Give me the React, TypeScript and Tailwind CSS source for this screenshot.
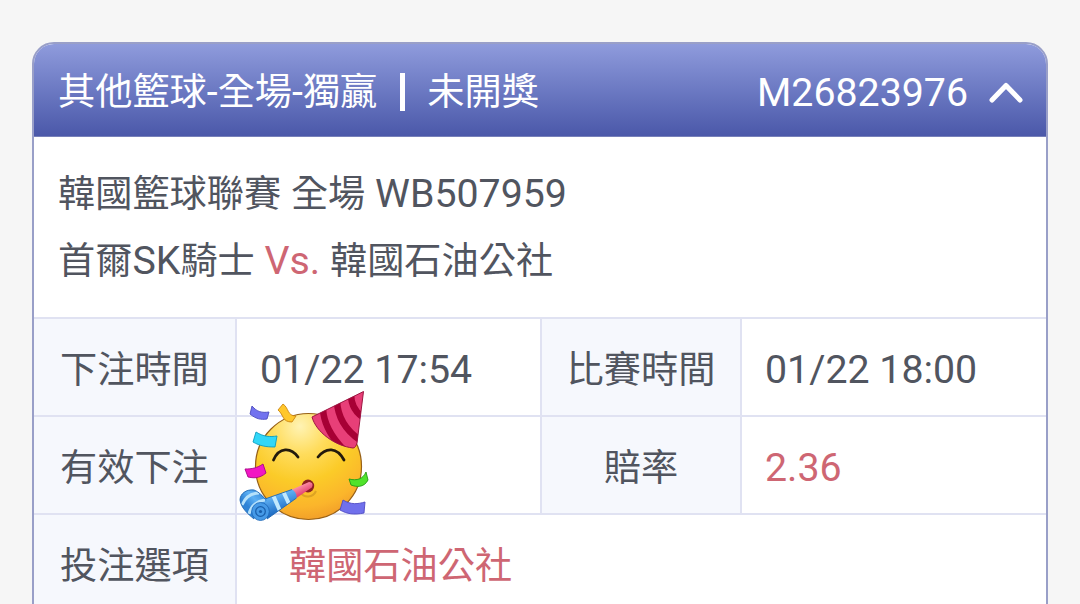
import React from 'react';
import clsx from 'clsx';

const Latin = ({ children, className }: { children: React.ReactNode; className?: string }) => (
  <span className={clsx('whitespace-pre text-[39.3px]', className)}>{children}</span>
);

const PartyFace = () => (
  <svg className="absolute left-[2px] top-[-26px] z-10 h-[134px] w-[132px]" viewBox="0 0 132 134" fill="none">
    <defs>
      <radialGradient id="face" cx="0.42" cy="0.12" r="0.95">
        <stop offset="0" stopColor="#fff3b4" />
        <stop offset="0.28" stopColor="#ffdc5c" />
        <stop offset="0.55" stopColor="#fbcb28" />
        <stop offset="0.8" stopColor="#fbb52b" />
        <stop offset="1" stopColor="#ee9528" />
      </radialGradient>
      <linearGradient id="horn" x1="36" y1="103" x2="42" y2="121" gradientUnits="userSpaceOnUse">
        <stop stopColor="#66b8f8" />
        <stop offset="1" stopColor="#1f6dc4" />
      </linearGradient>
      <linearGradient id="roll" x1="8" y1="114" x2="22" y2="101" gradientUnits="userSpaceOnUse">
        <stop stopColor="#2f83d6" />
        <stop offset="0.5" stopColor="#5cb0f4" />
        <stop offset="1" stopColor="#3b8edd" />
      </linearGradient>
      <linearGradient id="tip" x1="60" y1="94" x2="65" y2="104" gradientUnits="userSpaceOnUse">
        <stop stopColor="#ff99ac" />
        <stop offset="1" stopColor="#df366a" />
      </linearGradient>
      <clipPath id="hat">
        <path d="M124.500 0.500L73 26C77 41 96 55 114 57C116 57 117 55 118 52Z" />
      </clipPath>
      <clipPath id="tube">
        <path d="M22 109.500L53 98.500C56 100 58 103 57.500 107L28 128Z" />
      </clipPath>
      <clipPath id="coil">
        <path d="M1 109C1 103 7 98 15 99C18 100 24 105 28 109L15 128C9 123 2 117 1 109Z" />
      </clipPath>
    </defs>

    <circle cx="69.500" cy="75.500" r="53" fill="url(#face)" stroke="#976016" strokeWidth="1.200" />

    {/* eyes */}
    <path d="M34.500 69C40 56 52 56 59 66M79 66C87 56 98 56 105 69" stroke="#231a0c" strokeWidth="2.800" strokeLinecap="round" />

    {/* mouth */}
    <path d="M62 102C65 107 74 107 77 100" stroke="#dda323" strokeWidth="2" />
    <ellipse cx="69" cy="95" rx="6.200" ry="6.500" fill="#8d2022" />

    {/* hat */}
    <g clipPath="url(#hat)">
      <path d="M65 0H130V64H65Z" fill="#e83f78" />
      <path d="M84 18Q85 39 106 60M98 10Q99 34 121 49M112 3Q112 20 127 28" stroke="#a70035" strokeWidth="6.500" />
    </g>
    <path d="M124.500 0.500L73 26C77 41 96 55 114 57C116 57 117 55 118 52Z" stroke="#9c1742" strokeWidth="1" />

    {/* blower */}
    <path d="M53 98.500L70 91C74 91 74.500 95 72 97L57.500 107Z" fill="url(#tip)" />
    <g clipPath="url(#tube)">
      <path d="M20 95H60V130H20Z" fill="url(#horn)" />
      <path d="M34 104L41 120M44 100L51 115" stroke="#c2e9fd" strokeWidth="4" />
    </g>
    <g clipPath="url(#coil)">
      <path d="M0 96H30V130H0Z" fill="url(#roll)" />
      <path d="M3 114Q8 102 20 102M10 123Q13 111 26 109" stroke="#b5e1fb" strokeWidth="3" />
    </g>
    <path d="M15 128C9 123 2 117 1 109C1 103 7 98 15 99C18 100 22 103 26 108L53 98.500M28 128L57.500 107" stroke="#1f66b0" strokeWidth="0.900" />
    <ellipse cx="21.500" cy="120.500" rx="8.800" ry="9" fill="#469ae7" stroke="#1b64b5" strokeWidth="0.800" />
    <ellipse cx="21.500" cy="120.500" rx="4.800" ry="4.800" stroke="#185eaa" strokeWidth="1.200" />
    <circle cx="21.500" cy="120.500" r="1.600" fill="#185eaa" />

    {/* confetti */}
    <g strokeWidth="0.900" strokeLinejoin="round">
      <path d="M13 15C18 21 23 22 30 21L28 28C22 29 17 28 11 23Z" fill="#7272ef" stroke="#4c4bbe" />
      <path d="M39 19L44 13C50 17 48 25 57 25L53 31C43 31 45 24 39 19Z" fill="#ffc72b" stroke="#cc8611" />
      <path d="M17 41C25 46 31 46 38 45L36 56C27 56 21 55 14 51Z" fill="#31d7f8" stroke="#0b9cbf" />
      <path d="M6 78C13 78 18 77 24 73L27 82C20 88 14 87 9 86Z" fill="#f216c3" stroke="#a60586" />
      <path d="M110 88C118 90 124 88 127 81L129 89C125 97 117 96 112 94Z" fill="#50e32b" stroke="#239b13" />
      <path d="M104 109C112 114 119 113 126 111L125 122C115 124 108 123 101 119Z" fill="#7070ec" stroke="#4e4ac4" />
    </g>
  </svg>
);

const Label = ({ children, center }: { children: React.ReactNode; center?: boolean }) => (
  <div
    className={clsx(
      'flex items-center border-r-2 border-t-2 border-[#e0e2f2] bg-[#f6f8fd] pt-[7px]',
      center ? 'justify-center' : 'pl-[26px]'
    )}
  >
    {children}
  </div>
);

const Value = ({ children, className }: { children?: React.ReactNode; className?: string }) => (
  <div className={clsx('relative flex items-center border-t-2 border-[#e0e2f2]', className)}>{children}</div>
);

const App = () => {
  return (
    <div className="h-[604px] overflow-hidden bg-[#f6f6f6] px-8 pt-[42px] font-[Roboto,'Noto_Sans_CJK_TC',sans-serif] text-[37.2px] leading-[67px] text-[#51555f]">
      <div className="h-[620px] overflow-hidden rounded-t-[22px] border-2 border-[#999fc8] bg-white">
        <div className="flex h-[93px] items-center justify-between border-b border-[#7780b9] bg-linear-to-b from-[#8f9bdc] to-[#4b58a9] pl-6 pr-[23px] pt-[3px] text-white">
          <div className="flex items-center">
            <span className="pt-[2px]">其他籃球<Latin>-</Latin>全場<Latin>-</Latin>獨贏</span>
            <span className="ml-[23px] mr-[22px] h-[38px] w-[5px] bg-white" />
            <span className="pt-[2px]">未開獎</span>
          </div>
          <div className="flex items-center">
            <Latin className="pt-[3px]">M26823976</Latin>
            <svg className="ml-[21px] mt-[3px] h-6 w-[34px]" viewBox="0 0 34 24" fill="none">
              <path d="M3 19L17 4.500L31 19" stroke="white" strokeWidth="5" strokeLinecap="round" strokeLinejoin="round" />
            </svg>
          </div>
        </div>

        <div className="h-[180px] pl-[24px] pt-[24px]">
          <div className="h-[67px] whitespace-nowrap">韓國籃球聯賽<Latin> </Latin>全場<Latin> WB507959</Latin></div>
          <div className="h-[67px] whitespace-nowrap">
            首爾<Latin>SK</Latin>騎士<Latin className="text-[#ce6673]"> Vs. </Latin>韓國石油公社
          </div>
        </div>

        <div className="grid grid-cols-[203px_305px_200px_304px] grid-rows-[98px_98px_98px]">
          <Label>下注時間</Label>
          <Value className="border-r-2 pl-[23px] pt-[6px]"><Latin>01/22 17:54</Latin></Value>
          <Label center>比賽時間</Label>
          <Value className="pl-[23px] pt-[6px]"><Latin>01/22 18:00</Latin></Value>

          <Label>有效下注</Label>
          <Value className="border-r-2"><PartyFace /></Value>
          <Label center>賠率</Label>
          <Value className="pl-[23px] pt-[6px] text-[#ce6673]"><Latin>2.36</Latin></Value>

          <Label>投注選項</Label>
          <Value className="col-span-3 pl-[52px] pt-[6px] text-[#ce6673]">韓國石油公社</Value>
        </div>
      </div>
    </div>
  );
};

export default App;
